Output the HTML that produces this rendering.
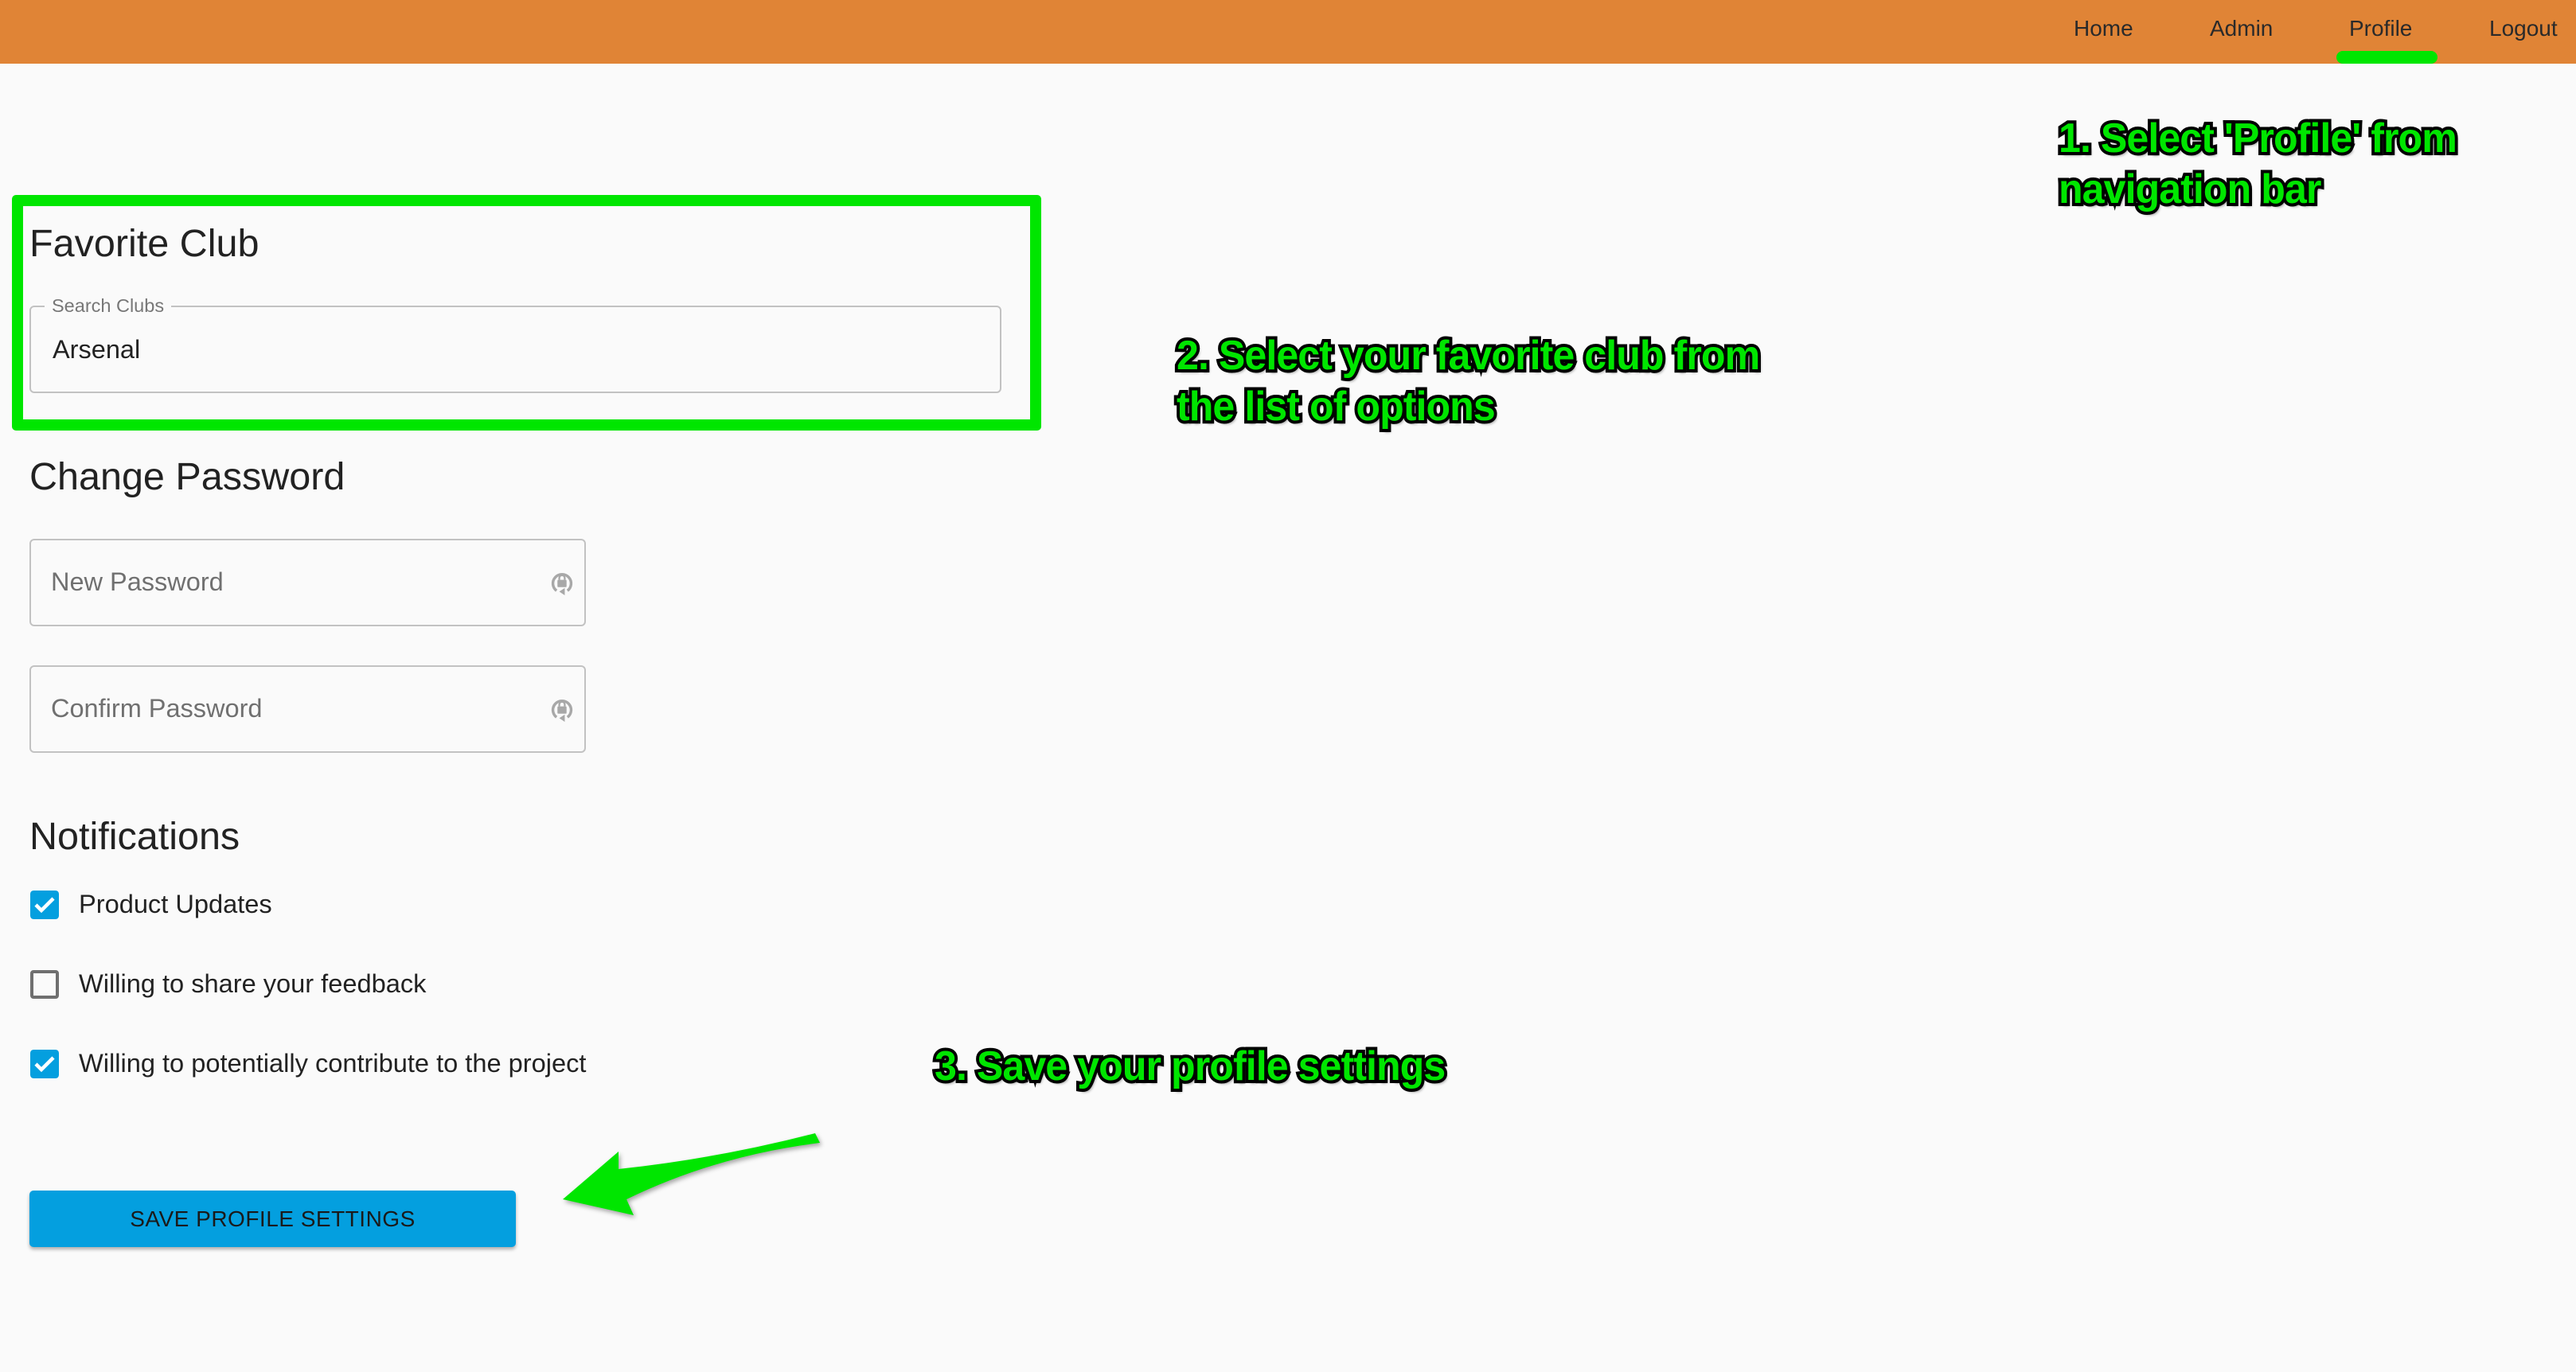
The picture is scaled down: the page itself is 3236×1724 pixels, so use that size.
<!DOCTYPE html>
<html><head><meta charset="utf-8">
<style>
*{margin:0;padding:0;box-sizing:border-box}
html,body{width:3236px;height:1724px;overflow:hidden;background:#fafafa;font-family:"Liberation Sans",Arial,sans-serif;color:#222}
.abs{position:absolute}
.nav{left:0;top:0;width:3236px;height:80px;background:#e08436}
.nav span{position:absolute;top:18px;font-size:28px;color:#2a2a2a;line-height:36px}
.ul{left:2935px;top:64px;width:127px;height:16px;background:#00e600;border-radius:8px}
.ann{font-weight:bold;color:#00e600;font-size:52px;line-height:64px;white-space:nowrap;transform-origin:0 0;
 -webkit-text-stroke:8px #000;paint-order:stroke fill;letter-spacing:-1px;text-shadow:3px 4px 4px rgba(0,0,0,.45)}
.h{font-size:48.5px;color:#222;line-height:56px}
.field{border:2px solid #c2c2c2;border-radius:6px;background:#fafafa}
.ph{font-size:32.5px;color:#707070;line-height:38px}
.cb{width:36px;height:36px;border-radius:4px}
.lab{font-size:32.6px;color:#222;line-height:38px}
</style></head><body>
<div class="abs nav">
 <span style="left:2605px">Home</span>
 <span style="left:2776px">Admin</span>
 <span style="left:2951px">Profile</span>
 <span style="left:3127px">Logout</span>
</div>
<div class="abs ul"></div>

<div class="abs ann" style="left:2586px;top:142px;transform:scaleX(0.965)">1. Select 'Profile' from<br>navigation bar</div>
<div class="abs ann" style="left:1478px;top:415px;transform:scaleX(0.965)">2. Select your favorite club from<br>the list of options</div>
<div class="abs ann" style="left:1174px;top:1308px;transform:scaleX(0.965)">3. Save your profile settings</div>

<div class="abs" style="left:15px;top:245px;width:1293px;height:296px;border:14px solid #00e600;border-radius:5px"></div>

<div class="abs h" style="left:37px;top:278px">Favorite Club</div>
<div class="abs field" style="left:37px;top:384px;width:1221px;height:110px"></div>
<div class="abs" style="left:56px;top:370px;padding:0 9px;background:#fafafa;font-size:23.5px;color:#777;line-height:28px">Search Clubs</div>
<div class="abs" style="left:66px;top:420px;font-size:32.5px;line-height:38px;color:#222">Arsenal</div>

<div class="abs h" style="left:37px;top:571px">Change Password</div>
<div class="abs field" style="left:37px;top:677px;width:699px;height:110px"></div>
<div class="abs ph" style="left:64px;top:712px">New Password</div>
<div class="abs field" style="left:37px;top:836px;width:699px;height:110px"></div>
<div class="abs ph" style="left:64px;top:871px">Confirm Password</div>
<svg class="abs" style="left:690px;top:714px" width="32" height="36" viewBox="0 0 28 30">
 <path d="M8 24 A10 10 0 1 1 20 24" fill="none" stroke="#a8a8a8" stroke-width="3"/>
 <path d="M17 21 L11 25 L17 29 Z" fill="#a8a8a8"/>
 <rect x="9" y="12" width="10" height="8" rx="1" fill="#a8a8a8"/>
 <path d="M11 12 V10 a3 3 0 0 1 6 0 V12" fill="none" stroke="#a8a8a8" stroke-width="2"/>
</svg>
<svg class="abs" style="left:690px;top:873px" width="32" height="36" viewBox="0 0 28 30">
 <path d="M8 24 A10 10 0 1 1 20 24" fill="none" stroke="#a8a8a8" stroke-width="3"/>
 <path d="M17 21 L11 25 L17 29 Z" fill="#a8a8a8"/>
 <rect x="9" y="12" width="10" height="8" rx="1" fill="#a8a8a8"/>
 <path d="M11 12 V10 a3 3 0 0 1 6 0 V12" fill="none" stroke="#a8a8a8" stroke-width="2"/>
</svg>

<div class="abs h" style="left:37px;top:1023px">Notifications</div>

<svg class="abs cb" style="left:38px;top:1119px" viewBox="0 0 36 36"><rect width="36" height="36" rx="4" fill="#049fdf"/><path d="M7 18 L14 25 L29 10" fill="none" stroke="#fff" stroke-width="4.5"/></svg>
<div class="abs lab" style="left:99px;top:1117px">Product Updates</div>
<div class="abs cb" style="left:38px;top:1219px;border:4px solid #6f6f6f"></div>
<div class="abs lab" style="left:99px;top:1217px">Willing to share your feedback</div>
<svg class="abs cb" style="left:38px;top:1319px" viewBox="0 0 36 36"><rect width="36" height="36" rx="4" fill="#049fdf"/><path d="M7 18 L14 25 L29 10" fill="none" stroke="#fff" stroke-width="4.5"/></svg>
<div class="abs lab" style="left:99px;top:1317px">Willing to potentially contribute to the project</div>

<div class="abs" style="left:37px;top:1496px;width:611px;height:71px;background:#049fdf;border-radius:5px;box-shadow:0 3px 4px rgba(0,0,0,.3);font-size:28px;color:#1a1a1a;text-align:center;line-height:71px;letter-spacing:0.5px">SAVE PROFILE SETTINGS</div>

<svg class="abs" style="left:0;top:0" width="3236" height="1724">
 <path d="M1024 1424 Q900 1456 777 1469 L777 1447 L707 1507 L796 1527 L787 1507 Q900 1452 1030 1436 Z" fill="#00e600" style="filter:drop-shadow(2px 3px 3px rgba(0,0,0,.35))"/>
</svg>
</body></html>
